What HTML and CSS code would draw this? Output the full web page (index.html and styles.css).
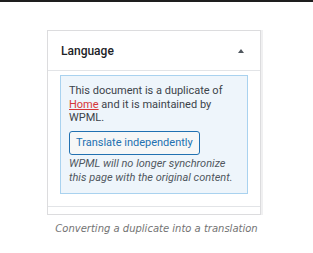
FILE: index.html
```html
<!DOCTYPE html>
<html lang="en">
<head>
  <meta charset="UTF-8">
  <title>Language box</title>
  <link rel="stylesheet" href="styles.css">
</head>
<body>
<div class="top-bar"></div>

<figure class="figure">
  <div class="postbox">
    <div class="postbox-header">
      <h2>Language</h2>
      <span class="toggle-arrow"></span>
    </div>
    <div class="postbox-inside">
      <div class="notice">
        <p>This document is a duplicate of <a href="#">Home</a> and it is maintained by WPML.</p>
        <button type="button" class="button">Translate independently</button>
        <p class="hint">WPML will no longer synchronize this page with the original content.</p>
      </div>
    </div>
    <div class="postbox-footer"></div>
  </div>
  <figcaption>Converting a duplicate into a translation</figcaption>
</figure>
</body>
</html>
```

FILE: styles.css
```css
* {
  margin: 0;
  padding: 0;
  box-sizing: border-box;
}

body {
  background: #fff;
  font-family: Roboto, 'Liberation Sans', sans-serif;
  color: #3c434a;
}

.top-bar {
  height: 2px;
  background: #1e1e1e;
}

.figure {
  padding-top: 28px;
}

.postbox {
  width: 214px;
  margin-left: 47px;
  border: 1px solid #dcdcde;
  box-shadow: 2px 0 0 #f0f0f1;
}

.postbox-header {
  height: 40px;
  padding: 0 13px;
  display: flex;
  align-items: center;
  justify-content: space-between;
  border-bottom: 1px solid #e2e4e7;
}

.postbox-header h2 {
  font-size: 12px;
  font-weight: 500;
  color: #1d2327;
}

.toggle-arrow {
  width: 0;
  height: 0;
  border-left: 3px solid transparent;
  border-right: 3px solid transparent;
  border-bottom: 4px solid #50575e;
  margin-right: 3px;
}

.postbox-inside {
  padding: 4px 12px 12px;
  border-bottom: 1px solid #e2e4e7;
}

.notice {
  background: #eef5fb;
  border: 1px solid #a9d2ef;
  padding: 8px 8px 8px;
  font-size: 11px;
  line-height: 13.5px;
}

.notice a {
  color: #d63638;
}

.button {
  display: block;
  margin: 6px 0 2px;
  height: 24px;
  padding: 0 6px;
  background: #f6f7f7;
  border: 1px solid #2271b1;
  border-radius: 3px;
  color: #2271b1;
  font-family: inherit;
  font-size: 11px;
}

.hint {
  font-style: italic;
  color: #50575e;
  line-height: 14px;
}

.postbox-footer {
  height: 7px;
}

figcaption {
  margin-top: 8px;
  text-align: center;
  font-family: 'DejaVu Sans', Verdana, sans-serif;
  font-style: italic;
  font-size: 10px;
  color: #737373;
}
```
